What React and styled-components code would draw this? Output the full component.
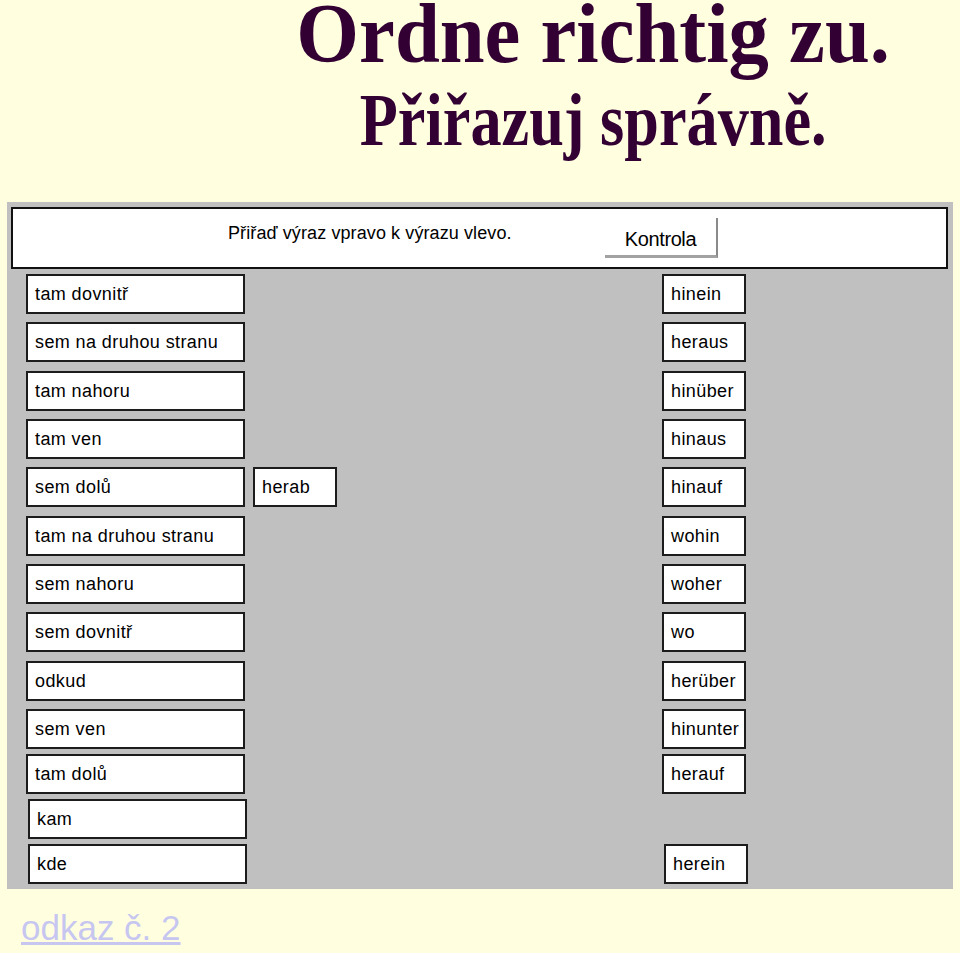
import React from 'react'
import styled, { createGlobalStyle } from 'styled-components'

const GlobalStyle = createGlobalStyle`
    html, body {
        margin: 0;
        padding: 0;
        background-color: #ffffe0;
    }
`;

const Page = styled.div`
    width: 960px;
    font-family: 'Liberation Sans', Arial, sans-serif;
`;

const Title = styled.h1`
    margin: 0;
    padding-left: 226px;
    text-align: center;
    font-family: 'Liberation Serif', 'Times New Roman', serif;
    font-weight: bold;
    color: #330033;
`;

const TitleLine = styled.span`
    display: block;
    font-size: ${p => p.$size}px;
    line-height: ${p => p.$lh}px;
    white-space: nowrap;

    span {
        display: inline-block;
        transform: scaleX(${p => p.$squeeze});
    }
`;

const Board = styled.div`
    box-sizing: border-box;
    width: 946px;
    margin: 31px 0 0 7px;
    padding: 5px 5px 5px 4px;
    background-color: #c0c0c0;
    display: flex;
    flex-direction: column;
`;

const Header = styled.div`
    box-sizing: border-box;
    height: 62px;
    border: 2px solid #111;
    background-color: #fff;
    display: flex;
    align-items: flex-start;
`;

const Prompt = styled.div`
    box-sizing: border-box;
    width: 592px;
    padding: 14px 0 0 215px;
    font-size: 18px;
    letter-spacing: 0.1px;
    color: #000;
    white-space: nowrap;
`;

const CheckButton = styled.button`
    box-sizing: border-box;
    width: 113px;
    height: 40px;
    margin-top: 9px;
    padding: 5px 0 0;
    border: none;
    border-right: 2px solid #8a8a8a;
    border-bottom: 3px solid #a2a2a2;
    background-color: #fff;
    font-family: 'Liberation Sans', Arial, sans-serif;
    font-size: 20px;
    letter-spacing: -0.4px;
    color: #000;
`;

const Rows = styled.div`
    display: flex;
    flex-direction: column;
    padding-top: 5px;
`;

const Row = styled.div`
    display: grid;
    grid-template-columns: 227px 409px 84px;
    height: 40px;
    margin-top: ${p => p.$gap}px;
    padding-left: ${p => 15 + p.$shift}px;
`;

const Card = styled.div`
    box-sizing: border-box;
    width: ${p => (p.$wide ? 219 : 84)}px;
    height: 40px;
    padding: 1px 0 0 7px;
    border: 2px solid #1c1c1c;
    background-color: #fff;
    display: flex;
    align-items: center;
    font-size: 18px;
    letter-spacing: 0.4px;
    color: #000;
    white-space: nowrap;
`;

const Link = styled.a`
    display: inline-block;
    margin: 19px 0 0 21px;
    font-family: 'Liberation Sans', Arial, sans-serif;
    font-size: 35px;
    color: #c6c6f0;
    text-decoration: underline;
`;

const rows = [
    { left: 'tam dovnitř', right: 'hinein' },
    { left: 'sem na druhou stranu', right: 'heraus' },
    { left: 'tam nahoru', right: 'hinüber' },
    { left: 'tam ven', right: 'hinaus' },
    { left: 'sem dolů', middle: 'herab', right: 'hinauf' },
    { left: 'tam na druhou stranu', right: 'wohin' },
    { left: 'sem nahoru', right: 'woher' },
    { left: 'sem dovnitř', right: 'wo' },
    { left: 'odkud', right: 'herüber' },
    { left: 'sem ven', right: 'hinunter' },
    { left: 'tam dolů', right: 'herauf', gap: 5 },
    { left: 'kam', gap: 5, shift: 2 },
    { left: 'kde', right: 'herein', gap: 5, shift: 2 },
];

const App = () => {
    return (
        <Page>
            <GlobalStyle />
            <Title>
                <TitleLine $size={84} $lh={68} $squeeze={0.96}><span>Ordne richtig zu.</span></TitleLine>
                <TitleLine $size={75} $lh={103} $squeeze={0.83}><span>Přiřazuj správně.</span></TitleLine>
            </Title>

            <Board>
                <Header>
                    <Prompt>Přiřaď výraz vpravo k výrazu vlevo.</Prompt>
                    <CheckButton>Kontrola</CheckButton>
                </Header>
                <Rows>
                    {rows.map((row, index) => (
                        <Row key={index} $gap={index === 0 ? 0 : row.gap || 8.33} $shift={row.shift || 0}>
                            <Card $wide>{row.left}</Card>
                            <div>{row.middle && <Card>{row.middle}</Card>}</div>
                            <div>{row.right && <Card>{row.right}</Card>}</div>
                        </Row>
                    ))}
                </Rows>
            </Board>

            <Link href="#">odkaz č. 2</Link>
        </Page>
    )
}

export default App
